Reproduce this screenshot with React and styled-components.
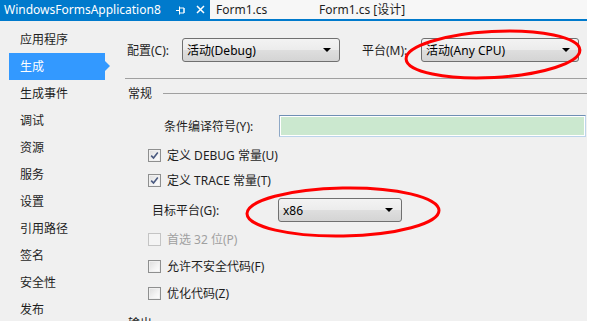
import React from "react"
import styled, { createGlobalStyle } from "styled-components"

const GlobalStyle = createGlobalStyle`
  html, body {
    margin: 0;
    padding: 0;
    background: #ffffff;
  }
  body {
    font-family: "Segoe UI", "Noto Sans", "Noto Sans CJK SC", sans-serif;
    font-size: 12px;
    color: #1e1e1e;
  }
`

const navItems = [
  "应用程序",
  "生成",
  "生成事件",
  "调试",
  "资源",
  "服务",
  "设置",
  "引用路径",
  "签名",
  "安全性",
  "发布",
]

const PinIcon = () => (
  <svg width="10" height="10" viewBox="0 0 10 10">
    <path d="M0 5.5h3.5M3.5 1.5v8M3.5 3h4.5v5h-4.5M8 3v5" stroke="#fff" strokeWidth="1" fill="none" />
  </svg>
)

const CloseIcon = () => (
  <svg width="9" height="9" viewBox="0 0 9 9">
    <path d="M1 1l7 7M8 1l-7 7" stroke="#fff" strokeWidth="1.5" />
  </svg>
)

const CheckMark = () => (
  <svg width="9" height="9" viewBox="0 0 9 9">
    <path d="M1.2 4.6l2.3 2.4 4.3-5.6" stroke="#4a5a80" strokeWidth="1.6" fill="none" />
  </svg>
)

const Dropdown = ({ value, width }) => (
  <Select $width={width}>
    <span>{value}</span>
    <Arrow />
  </Select>
)

const CheckRow = ({ label, checked, disabled, top }) => (
  <CheckLine $top={top} $disabled={disabled}>
    <Box $disabled={disabled}>{checked && <CheckMark />}</Box>
    <span>{label}</span>
  </CheckLine>
)

const App = () => {
  return (
    <Page>
      <GlobalStyle />
      <TabStrip>
        <ActiveTab>
          <TabTitle>WindowsFormsApplication8</TabTitle>
          <TabIcons>
            <PinIcon />
            <CloseIcon />
          </TabIcons>
        </ActiveTab>
        <Tab $width={103}>Form1.cs</Tab>
        <Tab>Form1.cs [设计]</Tab>
      </TabStrip>
      <TabLine />
      <Body>
        <Sidebar>
          {navItems.map((item) => (
            <NavItem key={item} $active={item === "生成"}>
              {item}
            </NavItem>
          ))}
        </Sidebar>
        <Main>
          <Row $top={17} $height={24}>
            <Label $pad={7} $width={62}>配置(C):</Label>
            <Dropdown value="活动(Debug)" width={158} />
            <Label $pad={22} $width={81}>平台(M):</Label>
            <Dropdown value="活动(Any CPU)" width={158} />
          </Row>
          <Separator />
          <Header>
            <span>常规</span>
            <HeaderLine />
          </Header>
          <Row $top={14} $height={22}>
            <Label $pad={44} $width={159}>条件编译符号(Y):</Label>
            <TextBox />
          </Row>
          <CheckRow top={8} checked label="定义 DEBUG 常量(U)" />
          <CheckRow top={5} checked label="定义 TRACE 常量(T)" />
          <Row $top={8} $height={24}>
            <Label $pad={32} $width={158}>目标平台(G):</Label>
            <Dropdown value="x86" width={124} />
          </Row>
          <CheckRow top={7} disabled label="首选 32 位(P)" />
          <CheckRow top={7} label="允许不安全代码(F)" />
          <CheckRow top={7} label="优化代码(Z)" />
          <Header $top={12}>
            <span>输出</span>
            <HeaderLine />
          </Header>
        </Main>
      </Body>
      <Marks width="590" height="328" viewBox="0 0 590 328">
        <ellipse cx="493" cy="54.5" rx="87" ry="23" transform="rotate(-3 493 54.5)" />
        <ellipse cx="343" cy="212" rx="96" ry="24" transform="rotate(-1 343 212)" />
      </Marks>
    </Page>
  )
}

const Page = styled.div`
  position: relative;
  width: 590px;
  height: 328px;
  overflow: hidden;
  background: #ffffff;
`

const TabStrip = styled.div`
  display: flex;
  width: 587px;
  height: 19px;
  background: #f7f7f7;
`

const ActiveTab = styled.div`
  display: flex;
  align-items: center;
  width: 210px;
  padding-left: 4px;
  box-sizing: border-box;
  background: #007acc;
  color: #ffffff;
`

const TabTitle = styled.span`
  width: 172px;
  white-space: nowrap;
  line-height: 19px;
`

const TabIcons = styled.span`
  display: flex;
  align-items: center;
  gap: 10px;
  svg {
    display: block;
  }
`

const Tab = styled.div`
  width: ${(p) => (p.$width ? `${p.$width}px` : "auto")};
  padding-left: 6px;
  box-sizing: border-box;
  line-height: 19px;
  white-space: nowrap;
  color: #1e1e1e;
`

const TabLine = styled.div`
  width: 587px;
  height: 2px;
  background: #007acc;
`

const Body = styled.div`
  display: flex;
  width: 587px;
  height: 300px;
  background: #f0f0f0;
  overflow: hidden;
`

const Sidebar = styled.div`
  width: 120px;
  flex-shrink: 0;
  padding-top: 5px;
`

const NavItem = styled.div`
  position: relative;
  width: 96px;
  height: 27px;
  margin-left: 9px;
  padding-left: 11px;
  box-sizing: border-box;
  line-height: 27px;
  color: ${(p) => (p.$active ? "#ffffff" : "#1e1e1e")};
  background: ${(p) => (p.$active ? "#3399ff" : "transparent")};
  &::after {
    content: "";
    display: ${(p) => (p.$active ? "block" : "none")};
    position: absolute;
    right: -5px;
    top: 8px;
    border-left: 5px solid #3399ff;
    border-top: 5px solid transparent;
    border-bottom: 5px solid transparent;
  }
`

const Main = styled.div`
  flex: 1;
  display: flex;
  flex-direction: column;
`

const Row = styled.div`
  display: flex;
  align-items: center;
  height: ${(p) => p.$height}px;
  margin-top: ${(p) => p.$top}px;
  flex-shrink: 0;
`

const Label = styled.span`
  width: ${(p) => p.$width}px;
  padding-left: ${(p) => p.$pad}px;
  box-sizing: border-box;
  white-space: nowrap;
  color: #1e1e1e;
  flex-shrink: 0;
`

const Select = styled.div`
  position: relative;
  width: ${(p) => p.$width}px;
  height: 100%;
  box-sizing: border-box;
  padding-left: 4px;
  display: flex;
  align-items: center;
  border: 1px solid #707070;
  border-radius: 3px;
  background: linear-gradient(#f3f3f3 0%, #ececec 48%, #dedede 52%, #d4d4d4 100%);
  color: #000000;
  flex-shrink: 0;
`

const Arrow = styled.span`
  position: absolute;
  right: 8px;
  top: 50%;
  margin-top: -2px;
  border-top: 4px solid #000000;
  border-left: 4px solid transparent;
  border-right: 4px solid transparent;
`

const Separator = styled.div`
  height: 1px;
  margin: 16px 0 0 5px;
  background: #a0a0a0;
  flex-shrink: 0;
`

const Header = styled.div`
  display: flex;
  align-items: center;
  height: 16px;
  margin-top: ${(p) => p.$top ?? 6}px;
  padding-left: 8px;
  color: #1e1e1e;
  flex-shrink: 0;
`

const HeaderLine = styled.div`
  flex: 1;
  height: 1px;
  margin-left: 11px;
  background: #a0a0a0;
`

const TextBox = styled.div`
  flex: 1;
  height: 100%;
  margin-right: 1px;
  box-sizing: border-box;
  border: 1px solid;
  border-color: #6f8fb4 #bcd4ea #bcd4ea #8ea8c6;
  box-shadow: inset 0 0 0 1px #ffffff;
  background: #cbe8cf;
`

const CheckLine = styled.div`
  display: flex;
  align-items: center;
  gap: 6px;
  height: 20px;
  margin-top: ${(p) => p.$top}px;
  padding-left: 28px;
  color: ${(p) => (p.$disabled ? "#a0a0a0" : "#1e1e1e")};
  flex-shrink: 0;
`

const Box = styled.span`
  display: flex;
  align-items: center;
  justify-content: center;
  width: 13px;
  height: 13px;
  box-sizing: border-box;
  border: 1px solid ${(p) => (p.$disabled ? "#c4c4c4" : "#8e8f8f")};
  background: ${(p) =>
    p.$disabled
      ? "#f4f4f4"
      : "linear-gradient(135deg, #dcdcdc 0%, #f4f4f4 60%, #ffffff 100%)"};
  box-shadow: inset 0 0 0 1px ${(p) => (p.$disabled ? "#f4f4f4" : "#f0f0f0")};
  svg {
    display: block;
  }
`

const Marks = styled.svg`
  position: absolute;
  left: 0;
  top: 0;
  pointer-events: none;
  ellipse {
    fill: none;
    stroke: #ff0000;
    stroke-width: 3;
  }
`

export default App
